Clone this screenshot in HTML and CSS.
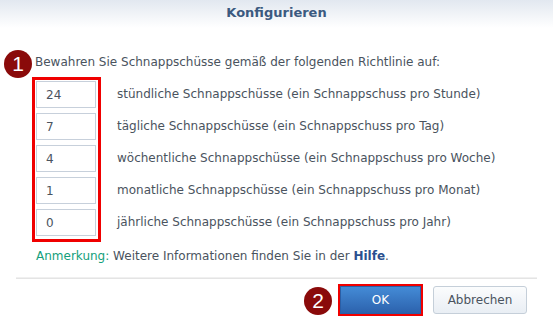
FILE: index.html
```html
<!DOCTYPE html>
<html>
<head>
  <meta charset="utf-8">
  <title>Konfigurieren</title>
  <link rel="stylesheet" href="styles.css">
</head>
<body>
  <div class="dialog">
    <div class="header">Konfigurieren</div>

    <div class="content">
      <span class="badge badge-one">1</span>
      <p class="intro">Bewahren Sie Schnappschüsse gemäß der folgenden Richtlinie auf:</p>

      <div class="policy">
        <div class="inputs">
          <input class="field" type="text" value="24">
          <input class="field" type="text" value="7">
          <input class="field" type="text" value="4">
          <input class="field" type="text" value="1">
          <input class="field" type="text" value="0">
        </div>
        <div class="labels">
          <div class="label">stündliche Schnappschüsse (ein Schnappschuss pro Stunde)</div>
          <div class="label">tägliche Schnappschüsse (ein Schnappschuss pro Tag)</div>
          <div class="label">wöchentliche Schnappschüsse (ein Schnappschuss pro Woche)</div>
          <div class="label">monatliche Schnappschüsse (ein Schnappschuss pro Monat)</div>
          <div class="label">jährliche Schnappschüsse (ein Schnappschuss pro Jahr)</div>
        </div>
      </div>

      <p class="note"><span class="note-key">Anmerkung:</span> Weitere Informationen finden Sie in der <b class="help">Hilfe</b>.</p>
    </div>

    <div class="footer">
      <div class="ok-wrap">
        <span class="badge badge-two">2</span>
        <button class="btn btn-primary">OK</button>
      </div>
      <button class="btn btn-default">Abbrechen</button>
    </div>
  </div>
</body>
</html>
```

FILE: styles.css
```css
html {
  font-family: "DejaVu Sans", Verdana, sans-serif;
  font-size: 12px;
  color: #4a535e;
}

body {
  margin: 0;
  background-color: white;
}

.dialog {
  width: 553px;
  height: 321px;
  position: relative;
}

.header {
  height: 28px;
  line-height: 26px;
  text-align: center;
  font-size: 13px;
  font-weight: bold;
  color: #3b5a80;
  background: linear-gradient(#e2e8f0, #ffffff);
}

.content {
  position: relative;
  padding: 26px 0 0 35px;
  height: 224px;
}

.intro {
  margin: 0;
  line-height: 16px;
}

.badge {
  position: absolute;
  width: 28px;
  height: 28px;
  border-radius: 50%;
  background-color: #8a0a0a;
  color: white;
  font-family: "Liberation Sans", Arial, sans-serif;
  font-size: 21px;
  line-height: 28px;
  text-align: center;
}

.badge-one {
  left: 4px;
  top: 22px;
}

.policy {
  display: flex;
  margin: 7px 0 0 -3px;
}

.inputs {
  display: flex;
  flex-direction: column;
  gap: 5px;
  padding: 1px 2px 3px 1px;
  border: 3px solid #f00000;
}

.field {
  box-sizing: border-box;
  width: 60px;
  height: 27px;
  margin: 0;
  padding: 0 0 0 9px;
  border: 1px solid #c7d0db;
  font-family: inherit;
  font-size: 12px;
  color: #4a535e;
  outline: none;
}

.labels {
  display: flex;
  flex-direction: column;
  gap: 5px;
  padding-top: 4px;
  margin-left: 16px;
}

.label {
  height: 27px;
  line-height: 27px;
  white-space: nowrap;
}

.note {
  margin: 6px 0 0 1px;
  line-height: 16px;
}

.note-key {
  color: #13a07c;
}

.help {
  color: #2a4f8f;
}

.footer {
  margin: 0 16px;
  border-top: 1px solid #e4e4e4;
  box-shadow: 0 -1px 0 #f0f0f0;
  display: flex;
  justify-content: flex-end;
  gap: 12px;
  padding: 7px 10px 0 0;
}

.ok-wrap {
  position: relative;
}

.badge-two {
  left: -36px;
  top: 1px;
}

.btn {
  box-sizing: border-box;
  height: 28px;
  margin: 0;
  border-radius: 3px;
  font-family: inherit;
  font-size: 12px;
  cursor: pointer;
}

.btn-primary {
  width: 81px;
  border: 1px solid #2a5ea6;
  color: white;
  background: linear-gradient(#448bd6, #2c62ad);
  outline: 2px solid #f00000;
  border-radius: 0;
}

.btn-default {
  width: 94px;
  border: 1px solid #c5cfd9;
  color: #4a535e;
  background: linear-gradient(#fbfcfd, #e9eef4);
}
```
